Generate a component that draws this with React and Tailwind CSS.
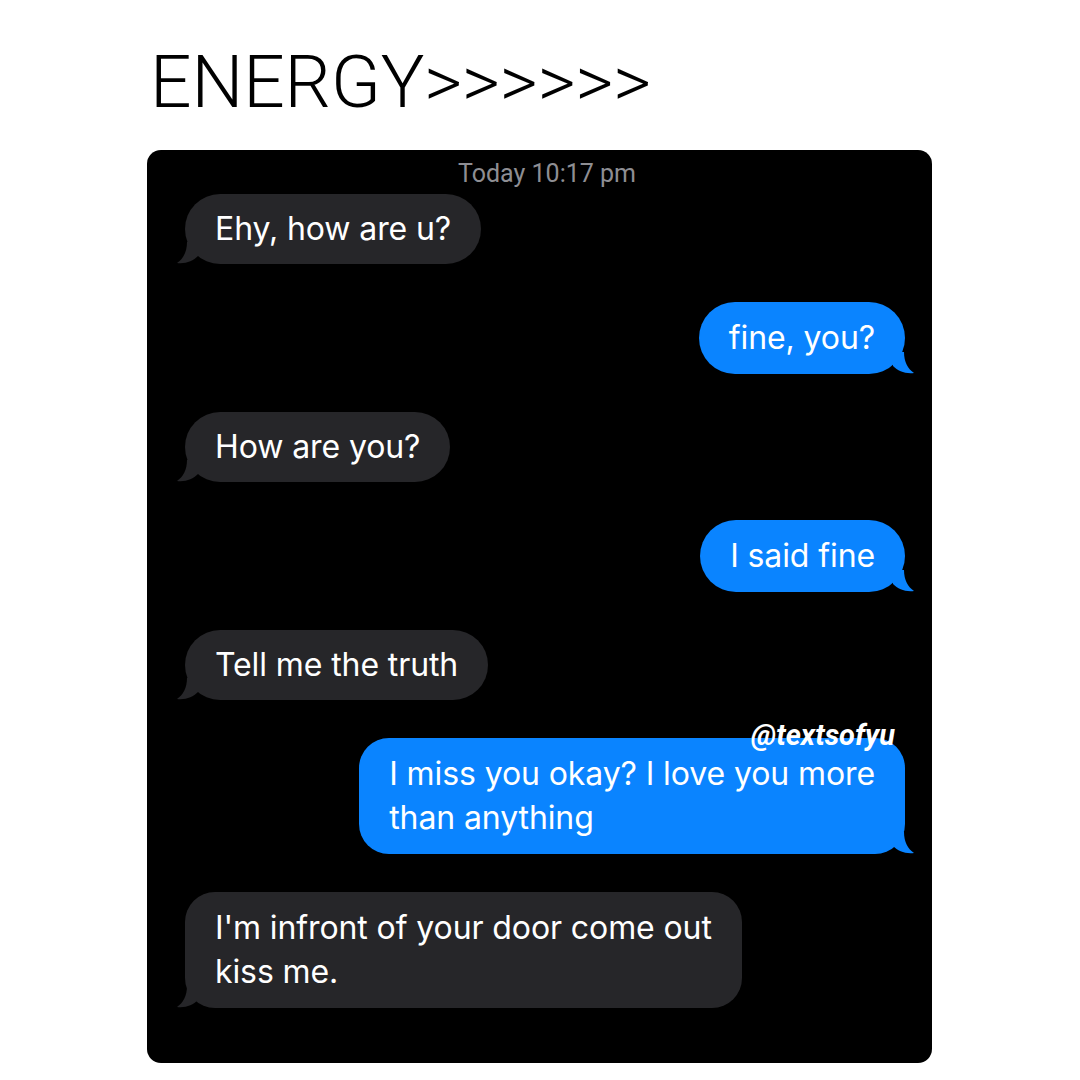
import React from 'react';

const messages = [
  { from: 'them', lines: ['Ehy, how are u?'] },
  { from: 'me', lines: ['fine, you?'] },
  { from: 'them', lines: ['How are you?'] },
  { from: 'me', lines: ['I said fine'] },
  { from: 'them', lines: ['Tell me the truth'] },
  { from: 'me', lines: ['I miss you okay? I love you more', 'than anything'], watermark: true },
  { from: 'them', lines: ["I'm infront of your door come out", 'kiss me.'] },
];

function Tail({ side, color }) {
  if (side === 'left') {
    return (
      <svg className="absolute -left-[8px] bottom-0" width="26" height="22" viewBox="0 0 26 22">
        <path d="M10 0 C10 10 6 17 0 21 C9 22 16 19 21 14 L21 0 Z" fill={color} />
      </svg>
    );
  }
  return (
    <svg className="absolute -right-[9px] bottom-0" width="26" height="22" viewBox="0 0 26 22">
      <path d="M16 0 C16 10 20 17 26 21 C17 22 10 19 5 14 L5 0 Z" fill={color} />
    </svg>
  );
}

function Bubble({ msg }) {
  const mine = msg.from === 'me';
  const multi = msg.lines.length > 1;
  let pad = 'py-[13px]';
  if (multi) pad = 'py-[14px]';
  else if (mine) pad = 'pt-[14px] pb-[14px]';
  return (
    <div className={mine ? 'flex justify-end pr-[27px]' : 'flex justify-start pl-[38px]'}>
      <div
        className={`relative px-[30px] text-[32px] leading-[44px] text-white font-['Inter',sans-serif] ${pad} ${
          multi ? 'rounded-[30px]' : 'rounded-[36px]'
        } ${mine ? 'bg-[#0a84ff]' : 'bg-[#262629]'}`}
      >
        <Tail side={mine ? 'right' : 'left'} color={mine ? '#0a84ff' : '#262629'} />
        <div className="relative tracking-[-0.1px]">
          {msg.lines.map((l) => (
            <div key={l}>{l}</div>
          ))}
        </div>
        {msg.watermark && (
          <div className="absolute right-[10px] -top-[19px] font-['Roboto',sans-serif] text-[29px] leading-[32px] font-bold italic text-white">
            @textsofyu
          </div>
        )}
      </div>
    </div>
  );
}

export default function App() {
  return (
    <div className="w-[1080px] h-[1080px] bg-white font-['Roboto',sans-serif] overflow-hidden">
      <div className="pl-[150px] pt-[44px] text-[73px] leading-[76px] font-light text-black tracking-[-0.1px]">
        ENERGY&gt;&gt;&gt;&gt;&gt;&gt;
      </div>
      <div className="ml-[147px] mt-[30px] w-[785px] h-[913px] bg-black rounded-[14px] overflow-hidden">
        <div className="text-center text-[25px] leading-[30px] text-[#8e8e93] pt-[9px] pl-[15px]">Today 10:17 pm</div>
        <div className="flex flex-col gap-[38px] mt-[5px]">
          {messages.map((m, i) => (
            <Bubble key={i} msg={m} />
          ))}
        </div>
      </div>
    </div>
  );
}
